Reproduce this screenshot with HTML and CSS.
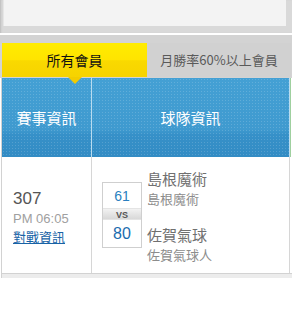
FILE: index.html
```html
<!DOCTYPE html>
<html lang="zh-Hant">
<head>
    <meta charset="UTF-8">
    <meta name="viewport" content="width=device-width, initial-scale=1.0">
    <title>賽事列表</title>
    <link rel="stylesheet" href="styles.css">
</head>
<body>
    <div class="top-panel">
        <div class="top-inner"></div>
    </div>

    <div class="tab-bar">
        <div class="tab active">所有會員</div>
        <div class="tab">月勝率60%以上會員</div>
    </div>

    <div class="schedule">
        <div class="head">賽事資訊</div>
        <div class="head">球隊資訊</div>
        <div class="head extra"></div>

        <div class="cell game-info">
            <div class="game-no">307</div>
            <div class="game-time">PM 06:05</div>
            <a class="game-link" href="#">對戰資訊</a>
        </div>
        <div class="cell teams">
            <div class="score-box">
                <div class="score home">61</div>
                <div class="vs">VS</div>
                <div class="score away">80</div>
            </div>
            <div class="team-names">
                <div class="team">
                    <div class="team-name">島根魔術</div>
                    <div class="team-sub">島根魔術</div>
                </div>
                <div class="team">
                    <div class="team-name">佐賀氣球</div>
                    <div class="team-sub">佐賀氣球人</div>
                </div>
            </div>
        </div>
        <div class="cell extra"></div>

        <div class="foot"></div>
    </div>
</body>
</html>
```

FILE: styles.css
```css
body {
    margin: 0;
    width: 292px;
    overflow: hidden;
    background: #fff;
    font-family: "Noto Sans CJK TC", "Liberation Sans", sans-serif;
}
.top-panel {
    background: #d9d9d9;
    padding: 0 6px 7px 3px;
    border-bottom: 2px solid #fff;
    box-shadow: inset 2px 0 2px -1px #bdbdbd;
}
.top-inner {
    height: 26px;
    background: #f3f3f3;
    box-shadow: inset 1px 0 0 #e6e6e6;
}
.tab-bar {
    display: flex;
    background: #d3d3d3;
    padding: 8px 1px 1px 2px;
}
.tab {
    height: 34px;
    line-height: 34px;
    text-align: center;
    font-size: 13px;
    color: #5a5a5a;
    width: 144px;
    background: #d1d1d1;
}
.tab.active {
    position: relative;
    width: 145px;
    font-size: 14px;
    color: #111;
    background: linear-gradient(#ffec00, #ffe400 50%, #f9d900 52%, #f6d300);
}
.tab.active::after {
    content: "";
    position: absolute;
    left: 66px;
    bottom: -7px;
    border-left: 7px solid transparent;
    border-right: 7px solid transparent;
    border-top: 7px solid #f2cc00;
    z-index: 2;
}
.schedule {
    display: grid;
    grid-template-columns: 90px 198px 1fr;
    margin-left: 1px;
    border-left: 1px solid #d2d2d2;
}
.head {
    height: 79px;
    line-height: 79px;
    text-align: center;
    color: #fff;
    font-size: 15px;
    border-right: 1px solid #b9dcf0;
    background:
        radial-gradient(circle, rgba(255,255,255,0.16) 0.7px, transparent 1px) 0 0 / 3px 3px,
        linear-gradient(#44a0d4, #3f9acf 65%, #3690c8 72%, #338cc4);
}
.head.extra {
    background: #fff;
    border-right: none;
    border-left: 1px solid #9fd09f;
}
.cell {
    height: 116px;
    border-right: 1px solid #d6d6d6;
    background: #fff;
}
.cell.extra {
    border-right: none;
}
.game-info {
    display: flex;
    flex-direction: column;
    justify-content: center;
    padding-left: 11px;
    padding-top: 2px;
    box-sizing: border-box;
    font-family: "Liberation Sans", "Noto Sans CJK TC", sans-serif;
}
.game-no {
    font-size: 17px;
    line-height: 22px;
    color: #555;
}
.game-time {
    font-size: 13px;
    line-height: 18px;
    color: #a0a0a0;
}
.game-link {
    font-family: "Noto Sans CJK TC", sans-serif;
    font-size: 13px;
    line-height: 17px;
    color: #1863a6;
    text-decoration: underline;
}
.teams {
    display: flex;
    align-items: center;
    padding-left: 10px;
    box-sizing: border-box;
}
.score-box {
    width: 40px;
    box-sizing: border-box;
    border: 1px solid #cfcfcf;
    font-family: "Liberation Sans", sans-serif;
    text-align: center;
}
.score {
    color: #2a7fc0;
}
.score.home {
    height: 25px;
    line-height: 26px;
    font-size: 14px;
}
.score.away {
    height: 27px;
    line-height: 27px;
    font-size: 16px;
    color: #1a6cae;
}
.vs {
    height: 12px;
    line-height: 12px;
    font-size: 9px;
    font-weight: bold;
    color: #555;
    background: linear-gradient(#f2f2f2, #d8d8d8);
    border-top: 1px solid #e4e4e4;
    border-bottom: 1px solid #e4e4e4;
    box-sizing: border-box;
}
.team-names {
    display: flex;
    flex-direction: column;
    gap: 17px;
    margin-left: 5px;
    margin-top: 3px;
}
.team-name {
    font-size: 15px;
    line-height: 20px;
    color: #707070;
}
.team-sub {
    font-size: 13px;
    line-height: 19px;
    color: #8c8c8c;
}
.foot {
    grid-column: 1 / -1;
    height: 4px;
    border-top: 1px solid #d2d2d2;
    background: #ececec;
}
```
